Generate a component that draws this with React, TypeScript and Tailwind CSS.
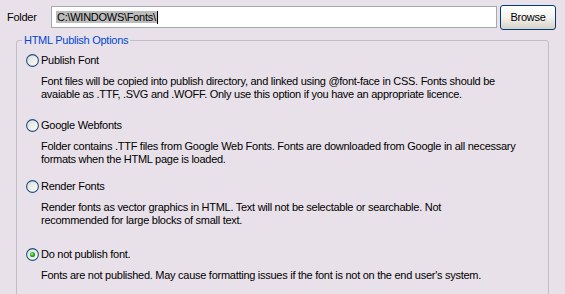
const options = [
  {
    label: 'Publish Font',
    text: [
      'Font files will be copied into publish directory, and linked using @font-face in CSS. Fonts should be',
      'avaiable as .TTF, .SVG and .WOFF. Only use this option if you have an appropriate licence.',
    ],
    rowClass: 'mt-[5px]',
  },
  {
    label: 'Google Webfonts',
    text: [
      'Folder contains .TTF files from Google Web Fonts. Fonts are downloaded from Google in all necessary',
      'formats when the HTML page is loaded.',
    ],
    rowClass: 'mt-[16px]',
  },
  {
    label: 'Render Fonts',
    text: [
      'Render fonts as vector graphics in HTML. Text will not be selectable or searchable. Not',
      'recommended for large blocks of small text.',
    ],
    rowClass: 'mt-[12px]',
  },
  {
    label: 'Do not publish font.',
    text: ["Fonts are not published. May cause formatting issues if the font is not on the end user's system."],
    rowClass: 'mt-[19px]',
    checked: true,
  },
]

function Radio({ checked }: { checked?: boolean }) {
  return (
    <svg width="13" height="13" viewBox="0 0 13 13" className="shrink-0">
      <defs>
        <linearGradient id="rg" x1="0" y1="0" x2="1" y2="1">
          <stop offset="0" stopColor="#dcdcd5" />
          <stop offset="1" stopColor="#ffffff" />
        </linearGradient>
        <radialGradient id="dot" cx="0.4" cy="0.4" r="0.6">
          <stop offset="0" stopColor="#b6f3a7" />
          <stop offset="0.5" stopColor="#3fbc2d" />
          <stop offset="1" stopColor="#1b8a12" />
        </radialGradient>
      </defs>
      <circle cx="6.5" cy="6.5" r="5.9" fill="url(#rg)" stroke="#1c5180" strokeWidth="1.1" />
      {checked && <circle cx="6.5" cy="6.5" r="2.6" fill="url(#dot)" />}
    </svg>
  )
}

export default function App() {
  return (
    <div className="w-[565px] h-[294px] overflow-hidden bg-[#e9e1e9] text-[11px] leading-[13px] tracking-[-0.27px] text-black font-['Liberation_Sans',Arial,sans-serif]">
      <div className="flex items-center h-[26px] mt-[4px] pl-[7px] pr-[9px]">
        <div className="w-[44px]">Folder</div>
        <div className="flex-1 h-[22px] bg-white border border-[#a3a9b3] flex items-center pl-[4px]">
          <span className="bg-[#bcbcbc] px-[1px] leading-[12px]">C:\WINDOWS\Fonts\</span>
          <span className="w-px h-[13px] bg-black" />
        </div>
        <button className="ml-[3px] w-[56px] h-[25px] rounded-[3px] border border-[#003c74] bg-gradient-to-b from-white via-[#f3f3ef] to-[#d6d0c5] text-black">
          Browse
        </button>
      </div>

      <fieldset className="mt-[4px] ml-[16px] w-[533px] h-[300px] border border-[#c2bec6] rounded-[3px] px-[9px]">
        <legend className="-ml-[4px] px-[2px] text-[#0046d5] leading-[13px]">HTML Publish Options</legend>
        {options.map((o) => (
          <div key={o.label}>
            <div className={`flex items-center gap-[2px] h-[16px] ${o.rowClass}`}>
              <Radio checked={o.checked} />
              <span>{o.label}</span>
            </div>
            <div className="mt-[7px] pl-[15px]">
              {o.text.map((t) => (
                <div key={t} className="whitespace-nowrap">{t}</div>
              ))}
            </div>
          </div>
        ))}
      </fieldset>
    </div>
  )
}
